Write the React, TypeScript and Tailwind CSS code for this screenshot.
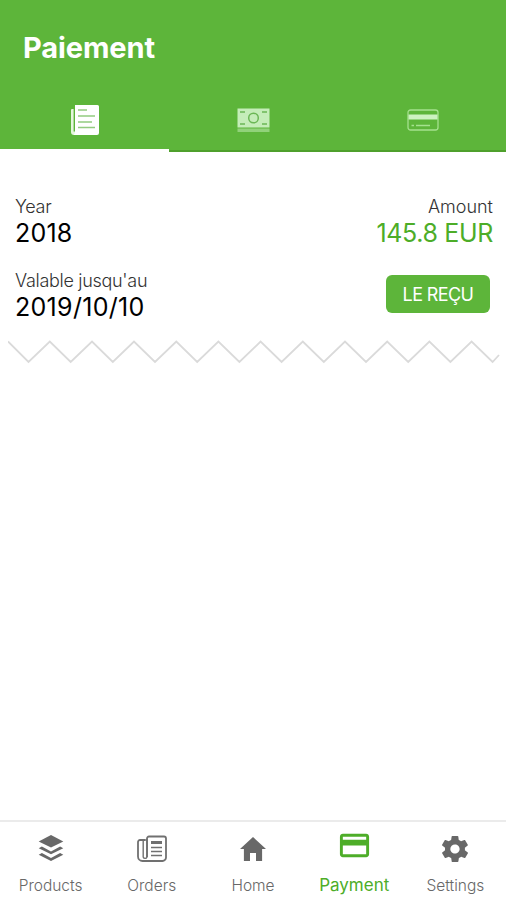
import React from "react";
import clsx from "clsx";
import { IoMdHome, IoMdSettings } from "react-icons/io";
import { MdPayment } from "react-icons/md";

function ReceiptIcon() {
  return (
    <svg width="30" height="32" viewBox="0 0 30 32">
      <path d="M2 5h1.6v22.6H5V31H4a3 3 0 0 1-3-3V6a1 1 0 0 1 1-1z" fill="#e4f6dc" />
      <path d="M5 1h22.500a1.500 1.500 0 0 1 1.500 1.500V29a2 2 0 0 1-2 2H3.500q1.500-1 1.500-3z" fill="#fff" />
      <path d="M8 6h9M8 12h17M8 18h14M8 23.500h17" stroke="#93cb80" strokeWidth="1.500" />
    </svg>
  );
}

function CashIcon() {
  return (
    <svg width="33" height="25" viewBox="0 0 33 25">
      <rect x="0.500" y="0.500" width="32" height="19" fill="#c5edb9" />
      <path d="M0.500 20.500h32v3.500h-32z" fill="#91d27a" />
      <circle cx="16.500" cy="10" r="4.800" fill="none" stroke="#6bb755" strokeWidth="1.500" />
      <path d="M3 4h5M25 4h5M3 16h5M25 16h5" stroke="#6bb755" strokeWidth="1.500" />
    </svg>
  );
}

function CardIcon() {
  return (
    <svg width="32" height="22" viewBox="0 0 32 22" fill="none">
      <rect x="1" y="1" width="30" height="20" rx="2.500" stroke="#a5e18e" strokeWidth="1.300" />
      <path d="M1.500 5.500h29v5h-29z" fill="#cdf2c1" />
      <path d="M4.500 16.500h2.500M9 16.500h14" stroke="#a5e18e" strokeWidth="1.500" />
    </svg>
  );
}

function LayersIcon() {
  return (
    <svg width="26" height="27" viewBox="0 0 26 27" fill="#686868">
      <path d="M13 0 25.300 6.500 13 12.600 0.700 6.500z" />
      <path d="M0.700 13.200 3.900 11.600 13 16.600 22.100 11.600 25.300 13.200 13 19.300z" />
      <path d="M0.700 19.700 3.900 18.100 13 23.100 22.100 18.100 25.300 19.700 13 26z" />
    </svg>
  );
}

function PaperIcon() {
  return (
    <svg width="32" height="28" viewBox="0 0 32 28" fill="none" stroke="#707070" strokeWidth="1.800">
      <path d="M11 22V3.500a2 2 0 0 1 2-2h15a2 2 0 0 1 2 2v19a3.500 3.500 0 0 1-3.500 3.500H6.500A4.500 4.500 0 0 1 2 21.500V7a2 2 0 0 1 2-2h5" />
      <path d="M7.200 6v16a2 2 0 0 0 3.800 0V5H8" strokeWidth="1.400" />
      <path d="M15 7.500h11" strokeWidth="3" />
      <path d="M15 12.500h11M15 16.500h11M15 20.500h11" strokeWidth="1.600" />
    </svg>
  );
}

const tabs = [<ReceiptIcon />, <CashIcon />, <CardIcon />];

const navItems = [
  { label: "Products", icon: <LayersIcon /> },
  { label: "Orders", icon: <PaperIcon /> },
  { label: "Home", icon: <IoMdHome size={32} /> },
  { label: "Payment", icon: <MdPayment size={35} />, active: true },
  { label: "Settings", icon: <IoMdSettings size={32} /> },
];

export default function App() {
  return (
    <div className="flex flex-col w-full h-[900px] bg-white font-['Inter',sans-serif] overflow-hidden">
      <header className="h-[152px] shrink-0 flex flex-col bg-[#5db53a]">
        <h1 className="h-[88px] pt-[31px] pl-[23px] text-[29px] leading-[34px] font-bold tracking-[-0.1px] text-white">
          Paiement
        </h1>
        <div className="grid grid-cols-3 grow">
          {tabs.map((icon, i) => (
            <button
              key={i}
              className={clsx(
                "flex items-center justify-center pl-[2px] pt-[2px]",
                i === 0
                  ? "border-b-3 border-white"
                  : "border-b-2 border-[#4fa02c]"
              )}
            >
              {icon}
            </button>
          ))}
        </div>
      </header>

      <main className="grow pt-[43px]">
        <div className="flex justify-between pl-[15px] pr-[13px]">
          <div>
            <p className="text-[18px] leading-6 font-light tracking-[-0.3px] text-[#333]">Year</p>
            <p className="text-[25px] leading-7 tracking-[0.2px] text-black">2018</p>
          </div>
          <div className="text-right">
            <p className="text-[18px] leading-6 font-light text-[#333]">Amount</p>
            <p className="text-[25px] leading-7 tracking-[-0.35px] text-[#4dad28]">145.8 EUR</p>
          </div>
        </div>
        <div className="flex justify-between mt-[22px] pl-[15px] pr-4">
          <div>
            <p className="text-[18px] leading-6 font-light tracking-[-0.3px] text-[#333]">
              Valable jusqu'au
            </p>
            <p className="text-[25px] leading-7 tracking-[0.3px] text-black">2019/10/10</p>
          </div>
          <button className="mt-[6px] w-[104px] h-[38px] rounded-md bg-[#5db53a] text-[18px] tracking-[-0.6px] text-white">
            LE REÇU
          </button>
        </div>
        {/* torn receipt edge */}
        <svg className="mt-[19px] ml-2" width="492" height="24" viewBox="0 0 492 24" fill="none">
          <path
            d="M0 1.500 20.500 22 41.800 1.500 62.700 22 84 1.500 104.800 22 126 1.500 147 22 168.300 1.500 189.200 22 210.400 1.500 231.400 22 252.600 1.500 273.600 22 294.800 1.500 315.800 22 337 1.500 358 22 379.200 1.500 400.200 22 421.400 1.500 442.400 22 463.600 1.500 484.600 22 491 15"
            stroke="#dadada"
            strokeWidth="1.800"
          />
        </svg>
      </main>

      <nav className="h-[80px] shrink-0 grid grid-cols-5 border-t-2 border-[#ebebeb]">
        {navItems.map(({ label, icon, active }) => (
          <a
            key={label}
            className={clsx(
              "flex flex-col items-center",
              active ? "text-[#4dad28]" : "text-[#686868]"
            )}
          >
            <span
              className={clsx(
                "flex items-center justify-center",
                active ? "h-[47px]" : "h-[53px]"
              )}
            >
              {icon}
            </span>
            <span
              className={clsx(
                "leading-5",
                active ? "mt-[6px] text-[17px]" : "mt-px text-[15.500px] font-light"
              )}
            >
              {label}
            </span>
          </a>
        ))}
      </nav>
    </div>
  );
}
